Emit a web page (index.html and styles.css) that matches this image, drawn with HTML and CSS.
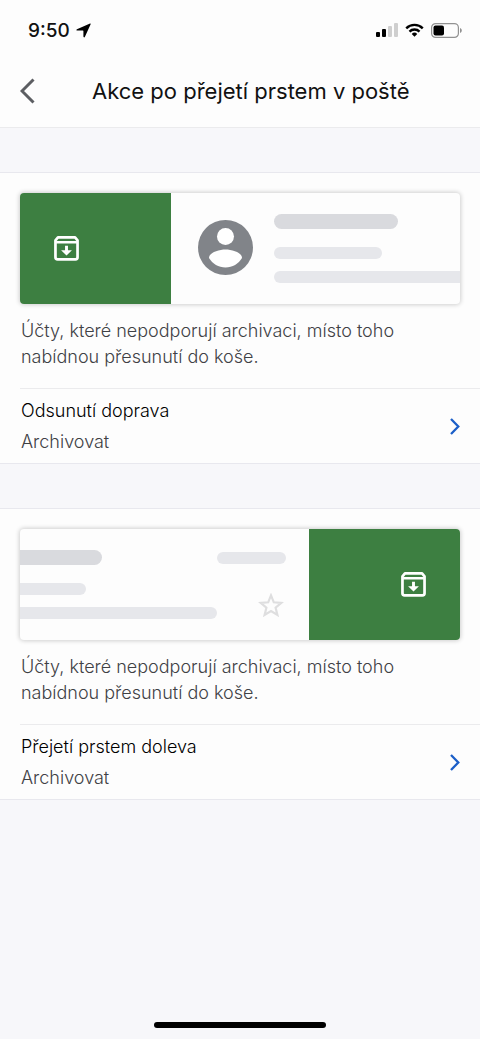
FILE: index.html
```html
<!DOCTYPE html>
<html lang="cs">
<head>
<meta charset="utf-8">
<meta name="viewport" content="width=device-width, initial-scale=1">
<title>Akce po přejetí prstem v poště</title>
<link rel="stylesheet" href="styles.css">
</head>
<body>
<svg class="defs" aria-hidden="true">
  <symbol id="archive" viewBox="0 0 24 24">
    <path fill="none" stroke="currentColor" stroke-width="2.6" stroke-linejoin="round" d="M1.400 4.200 3.800 1.400h16.400l2.400 2.800v16.200a2 2 0 0 1-2 2H3.400a2 2 0 0 1-2-2z"/>
    <path fill="none" stroke="currentColor" stroke-width="2.200" d="M2 6h20"/>
    <path fill="currentColor" d="M10.600 9.300h2.800v4.300h3.800L12 18.800l-5.200-5.200h3.800z"/>
  </symbol>
  <symbol id="chevron" viewBox="0 0 10 17">
    <path fill="none" stroke="currentColor" stroke-width="2.300" d="M1 1l7.300 7.500L1 16"/>
  </symbol>
</svg>
<div class="screen">
  <div class="status">
    <div class="status-left">
      <span class="time">9:50</span>
      <svg class="location" viewBox="0 0 16 16" aria-hidden="true"><path d="M15 .6c.5-.2.8.1.6.7L9.400 14.900c-.4.800-1.500.6-1.500-.4V8.600c0-.3-.2-.5-.5-.5H1.300c-1 0-1.200-1.100-.3-1.500z"/></svg>
    </div>
    <div class="status-right">
      <svg class="signal" viewBox="0 0 22 14" aria-hidden="true"><rect y="9" width="4" height="5" rx="1"/><rect x="6" y="6" width="4" height="8" rx="1"/><g fill="#cfcfcf"><rect x="12" y="3" width="4" height="11" rx="1"/><rect x="18" width="4" height="14" rx="1"/></g></svg>
      <svg class="wifi" viewBox="0 0 20 14" aria-hidden="true"><g fill="none" stroke="#000" stroke-width="2.500"><path d="M1.300 5.200a12.300 12.300 0 0 1 17.400 0"/><path d="M4.700 8.700a7.500 7.500 0 0 1 10.600 0"/></g><path d="M10 14l-2.900-2.900a4.200 4.200 0 0 1 5.800 0z"/></svg>
      <svg class="battery" viewBox="0 0 31 15" aria-hidden="true"><rect x=".6" y=".6" width="26.800" height="13.800" rx="4" fill="none" stroke="#929292" stroke-width="1.200"/><rect x="2.500" y="2.500" width="10.500" height="10" rx="2"/><path fill="#929292" d="M29 5c2.400.8 2.400 4.200 0 5z"/></svg>
    </div>
  </div>
  <header class="header">
    <button class="back" type="button" aria-label="Zpět"><svg viewBox="0 0 15 26" aria-hidden="true"><path fill="none" stroke="currentColor" stroke-width="3" d="M13.500 1.500 2 13l11.500 11.500"/></svg></button>
    <h1 class="title">Akce po přejetí prstem v poště</h1>
  </header>
  <main>
    <section class="section">
      <div class="preview">
        <div class="action"><svg class="archive" aria-hidden="true"><use href="#archive"/></svg></div>
        <div class="mail mail-right">
          <svg class="avatar" viewBox="0 0 55 55" aria-hidden="true"><circle cx="27.500" cy="27.500" r="27.500" fill="#818489"/><circle cx="27.500" cy="16.500" r="8.500" fill="#fff"/><path fill="#fff" d="M11 38c0-5.600 10-8.500 16.500-8.500S44 32.400 44 38c-3.500 5.800-9.500 9.500-16.500 9.500S14.500 43.800 11 38z"/></svg>
          <div class="lines">
            <div class="bar bar-name"></div>
            <div class="bar bar-subject"></div>
            <div class="bar bar-body"></div>
          </div>
        </div>
      </div>
      <p class="note">Účty, které nepodporují archivaci, místo toho nabídnou přesunutí do koše.</p>
      <button class="row" type="button">
        <span class="labels"><span class="label">Odsunutí doprava</span><span class="value">Archivovat</span></span>
        <svg class="chevron" aria-hidden="true"><use href="#chevron"/></svg>
      </button>
    </section>
    <section class="section">
      <div class="preview">
        <div class="mail mail-left">
          <div class="lines">
            <div class="bar bar-name"></div>
            <div class="bar bar-subject"></div>
            <div class="bar bar-body"></div>
          </div>
          <div class="meta">
            <div class="bar bar-date"></div>
            <svg class="star" viewBox="0 0 26 25" aria-hidden="true"><path fill="none" stroke="#dededf" stroke-width="2.200" d="M13 2.400l2.800 6.900 7.500.6-5.700 4.800 1.800 7.300-6.400-4-6.400 4 1.800-7.300-5.700-4.800 7.500-.6z"/></svg>
          </div>
        </div>
        <div class="action action-end"><svg class="archive" aria-hidden="true"><use href="#archive"/></svg></div>
      </div>
      <p class="note">Účty, které nepodporují archivaci, místo toho nabídnou přesunutí do koše.</p>
      <button class="row" type="button">
        <span class="labels"><span class="label">Přejetí prstem doleva</span><span class="value">Archivovat</span></span>
        <svg class="chevron" aria-hidden="true"><use href="#chevron"/></svg>
      </button>
    </section>
  </main>
  <div class="home"></div>
</div>
</body>
</html>
```
FILE: styles.css
```css
* { box-sizing: border-box; }
body { margin: 0; background: #f7f7fa; color: #111; font-family: Inter, "Noto Sans", sans-serif; }
svg { display: block; flex: none; }
button { border: 0; padding: 0; background: none; font: inherit; color: inherit; text-align: left; }
.defs { position: absolute; width: 0; height: 0; }
.screen { display: flex; flex-direction: column; min-height: 100vh; }
main { flex: 1; }

.status { display: flex; justify-content: space-between; align-items: center; height: 56px; padding: 4px 18px 0 28px; background: #fdfdfd; }
.status-left { display: flex; align-items: center; gap: 6px; }
.time { font-size: 19px; font-weight: 500; }
.location { width: 15px; height: 15px; }
.status-right { display: flex; align-items: center; gap: 7px; }
.signal { width: 22px; height: 14px; }
.wifi { width: 19px; height: 14px; }
.battery { width: 31px; height: 15px; }

.header { display: flex; align-items: center; height: 72px; padding: 0 20px 2px; background: #fdfdfd; border-bottom: 1px solid #ebebed; }
.back { width: 72px; color: #5c5e62; }
.back svg { width: 15px; height: 26px; }
.title { margin: 0; font-size: 22px; font-weight: 400; line-height: 28px; white-space: nowrap; }

.section { margin-top: 44px; padding: 20px 0 0 20px; background: #fdfdfd; border-top: 1px solid #e8e8ee; border-bottom: 1px solid #e8e8ee; }
.preview { display: flex; height: 111px; margin-right: 20px; border-radius: 4px; overflow: hidden; box-shadow: 0 0 4px 1px rgba(0, 0, 0, .18); background: #fdfdfd; }
.action { display: flex; align-items: center; width: 151px; flex: none; padding: 0 34px; background: #3d7f41; color: #fff; }
.action-end { justify-content: flex-end; }
.archive { width: 25px; height: 25px; }
.mail { display: flex; flex: 1; min-width: 0; }
.mail-right { padding: 0 0 0 27px; gap: 21px; }
.avatar { width: 55px; height: 55px; margin-top: 27px; }
.lines { flex: 1; min-width: 0; padding-top: 21px; }
.bar { height: 12px; border-radius: 6px; background: #e6e7eb; }
.bar-name { width: 124px; height: 15px; border-radius: 8px; background: #d9dade; margin-bottom: 18px; }
.bar-subject { width: 108px; margin-bottom: 12px; }
.mail-right .bar-body { border-radius: 6px 0 0 6px; }
.mail-left { padding-right: 23px; }
.mail-left .bar { border-radius: 0 8px 8px 0; }
.mail-left .bar-name { width: 82px; }
.mail-left .bar-subject { width: 66px; }
.meta { display: flex; flex-direction: column; align-items: flex-end; justify-content: space-between; padding: 23px 0 22px; }
.mail-left .bar-date { width: 69px; border-radius: 6px; }
.star { width: 26px; height: 25px; margin-right: 2px; }

.note { margin: 14px 40px 18px 1px; font-size: 18px; font-weight: 300; line-height: 26px; color: #3f4145; }
.row { display: flex; align-items: center; justify-content: space-between; width: 100%; padding: 6px 20px 6px 1px; border-top: 1px solid #ebebed; }
.labels { display: flex; flex-direction: column; }
.label, .value { font-size: 18px; line-height: 31px; font-weight: 300; }
.label { color: #000; }
.value { color: #3f4145; }
.chevron { width: 10px; height: 17px; color: #1c5fc8; }

.home { align-self: center; width: 172px; height: 6px; margin-bottom: 11px; border-radius: 3px; background: #000; }
```
